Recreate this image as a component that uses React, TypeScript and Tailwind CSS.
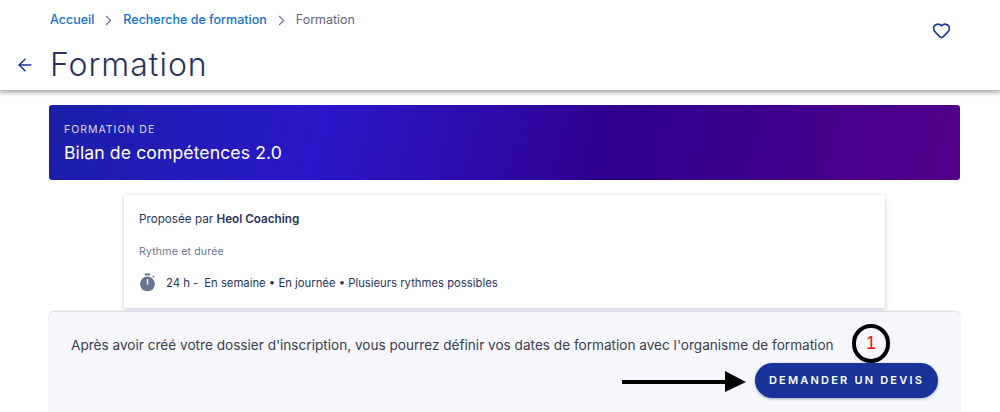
import { ArrowLeft, ChevronRight, Heart } from 'lucide-react';

function Stopwatch() {
  return (
    <svg viewBox="0 0 18 20" className="h-[19px] w-[17px] shrink-0" fill="#6b7394">
      <rect x="6" y="0.5" width="6" height="2" rx="0.6" />
      <path d="M14 3.6l1.2-1 1.2 1.3-1.2 1z" />
      <circle cx="9" cy="11.5" r="7.8" />
      <rect x="8.2" y="6.5" width="1.6" height="5.5" fill="#ffffff" />
    </svg>
  );
}

export default function App() {
  return (
    <div className="relative h-[412px] w-[1000px] overflow-hidden bg-white font-['Inter',sans-serif]">
      <header className="relative z-10 h-[91px] border-b border-[#b9b9b9] bg-white pt-[11px] shadow-[0_2px_4px_rgba(0,0,0,0.3)]">
        <div className="flex items-start justify-between pl-[50px] pr-[49px]">
          <nav className="flex items-center text-[12.5px] font-medium leading-[18px]">
            <span className="text-[#1272d3]">Accueil</span>
            <ChevronRight className="mx-[6px] h-[17px] w-[17px] text-[#6b7394]" strokeWidth={1.5} />
            <span className="text-[#1272d3]">Recherche de formation</span>
            <ChevronRight className="mx-[6px] h-[17px] w-[17px] text-[#6b7394]" strokeWidth={1.5} />
            <span className="font-normal text-[#5c6480]">Formation</span>
          </nav>
          <Heart className="mt-[10px] h-[19px] w-[19px] text-[#18349a]" strokeWidth={2} />
        </div>
        <div className="mt-[6px] flex items-center pl-[15px]">
          <ArrowLeft className="h-[20px] w-[20px] text-[#18349a]" strokeWidth={1.75} />
          <h1 className="ml-[15px] text-[32px] font-light leading-[38px] tracking-[1px] text-[#27345f]">Formation</h1>
        </div>
      </header>

      <main className="flex flex-col items-start pl-[49px] pt-[14px]">
        <section className="h-[75px] w-[911px] rounded-[3px] bg-[linear-gradient(105deg,#1a1fa8_0%,#2a17c9_30%,#30008f_62%,#52008a_100%)] pl-[15px] pt-[18px] text-white">
          <p className="text-[10.5px] leading-[14px] tracking-[1px] text-[#dcdcf5]">FORMATION DE</p>
          <p className="mt-[4px] text-[17.6px] leading-[24px] tracking-[0.1px]">Bilan de compétences 2.0</p>
        </section>

        <section className="mt-[15px] ml-[75px] h-[113px] w-[761px] rounded-[3px] bg-white pl-[15px] pt-[15px] shadow-[0_1px_4px_rgba(39,52,95,0.3)]">
          <p className="text-[11.7px] leading-[18px] text-[#27345f]">
            Proposée par <span className="font-semibold">Heol Coaching</span>
          </p>
          <p className="mt-[17px] text-[10.5px] leading-[14px] tracking-[0.2px] text-[#6b7394]">Rythme et durée</p>
          <div className="mt-[14px] flex items-center text-[11.3px] leading-[18px] text-[#27345f]">
            <Stopwatch />
            <span className="ml-[10px]">24 h -</span>
            <span className="ml-[6px]">En semaine • En journée • Plusieurs rythmes possibles</span>
          </div>
        </section>

        <section className="mt-[4px] flex h-[120px] w-[911px] flex-col rounded-t-[5px] bg-[#f6f7fc] pl-[22px] pr-[22px] pt-[23px] shadow-[0_-1px_2px_rgba(39,52,95,0.2)]">
          <p className="text-[13.6px] leading-[20px] text-[#3a3d4d]">
            Après avoir créé votre dossier d'inscription, vous pourrez définir vos dates de formation avec l'organisme de formation
          </p>
          <div className="mt-[8px] flex justify-end">
            <button className="h-[35px] w-[183px] rounded-full bg-[#18349a] text-[11px] font-semibold tracking-[2.2px] text-white shadow-[0_1px_3px_rgba(39,52,95,0.4)]">
              DEMANDER UN DEVIS
            </button>
          </div>
        </section>
      </main>

      {/* annotation drawn over the screenshot */}
      <div className="absolute left-[852px] top-[324px] flex h-[39px] w-[38px] items-center justify-center rounded-full border-[4px] border-black font-['Liberation_Sans',sans-serif] text-[18px] text-[#f01010]">
        1
      </div>
      <svg className="absolute left-[620px] top-[369px] h-[26px] w-[128px]" viewBox="0 0 128 26">
        <rect x="2" y="11" width="104" height="4" fill="#000000" />
        <polygon points="105,2 126,13 105,23" fill="#000000" />
      </svg>
    </div>
  );
}
